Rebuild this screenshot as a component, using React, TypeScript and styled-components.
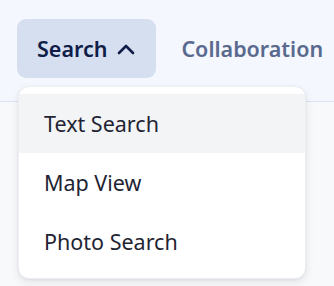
import React from "react";
import styled, { createGlobalStyle } from "styled-components";

const Global = createGlobalStyle`
  html, body { margin: 0; padding: 0; }
  body {
    background: #f8f9fb;
    font-family: "Noto Sans", "Open Sans", sans-serif;
    width: 334px;
    height: 286px;
    overflow: hidden;
  }
`;

const Header = styled.header`
  height: 102px;
  background: #f4f7fd;
  border-bottom: 1px solid #dbe3f4;
  display: flex;
  align-items: flex-start;
  padding: 19px 0 0 17px;
  box-sizing: border-box;
  gap: 5px;
`;

const MenuWrap = styled.div`
  position: relative;
`;

const NavButton = styled.button<{ $active?: boolean }>`
  height: 59px;
  padding: 0 ${(p) => (p.$active ? "18px" : "21px")} 0 20px;
  border: none;
  border-radius: 9px;
  background: ${(p) => (p.$active ? "#d6dff0" : "transparent")};
  color: ${(p) => (p.$active ? "#0f1d48" : "#5a6a8f")};
  font-family: inherit;
  font-size: 21.5px;
  font-weight: 600;
  display: flex;
  align-items: center;
  gap: 7px;
  cursor: pointer;
  white-space: nowrap;
`;

const Dropdown = styled.div`
  position: absolute;
  top: 67px;
  left: 1px;
  width: 288px;
  padding: 7px 0;
  background: #ffffff;
  border-radius: 11px;
  border: 1px solid #eceef2;
  box-sizing: border-box;
  box-shadow: 0 4px 10px rgba(15, 23, 42, 0.08), 0 1px 3px rgba(15, 23, 42, 0.06);
  display: flex;
  flex-direction: column;
`;

const Item = styled.div<{ $hover?: boolean }>`
  height: 59px;
  display: flex;
  align-items: center;
  padding-left: 25px;
  font-size: 21.5px;
  color: #1f2433;
  background: ${(p) => (p.$hover ? "#f3f4f6" : "transparent")};
`;

const Chevron = () => (
  <svg width="24" height="24" viewBox="0 0 24 24" fill="none" stroke="currentColor" strokeWidth="2.6" strokeLinecap="round" strokeLinejoin="round">
    <path d="M5 16l7-7 7 7" />
  </svg>
);

export default function App() {
  return (
    <>
      <Global />
      <Header>
        <MenuWrap>
          <NavButton $active>
            Search <Chevron />
          </NavButton>
          <Dropdown>
            <Item $hover>Text Search</Item>
            <Item>Map View</Item>
            <Item>Photo Search</Item>
          </Dropdown>
        </MenuWrap>
        <NavButton>Collaboration</NavButton>
      </Header>
    </>
  );
}
